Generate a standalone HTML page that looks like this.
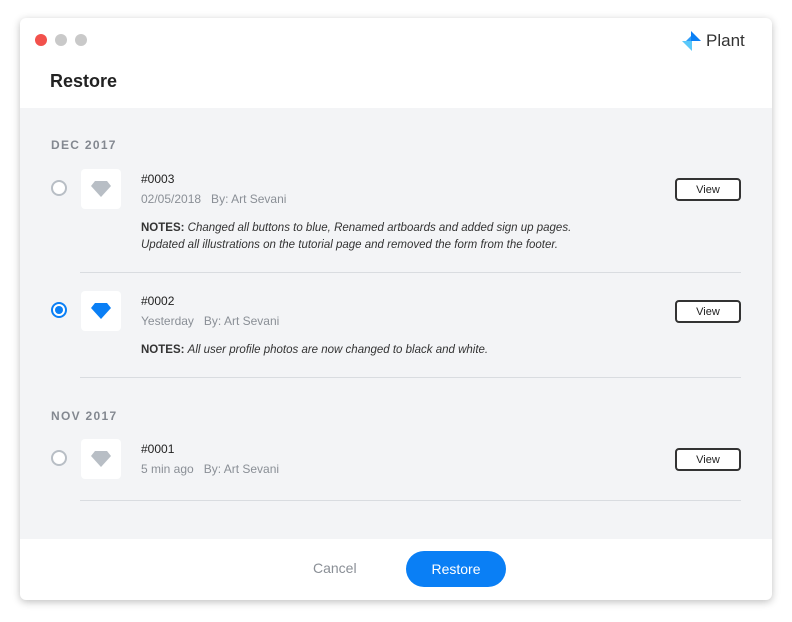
<!DOCTYPE html>
<html><head><meta charset="utf-8"><style>
*{margin:0;padding:0;box-sizing:border-box}
body{width:792px;height:622px;background:#fff;font-family:"Liberation Sans",sans-serif;position:relative;overflow:hidden}
.win{position:absolute;left:20px;top:18px;width:752px;height:582px;border-radius:6px;background:#fff;box-shadow:0 2px 8px rgba(0,0,0,.25);overflow:hidden}
.dot{position:absolute;top:16px;width:12px;height:12px;border-radius:50%}
.a{position:absolute}
.body{position:absolute;left:0;top:90px;width:752px;height:431px;background:#f3f4f6}
.sec{position:absolute;left:31px;font-size:12px;letter-spacing:1.3px;color:#838890;font-weight:bold}
.radio{position:absolute;left:31px;width:16px;height:16px;border-radius:50%;border:2px solid #b8bec5;background:#fff}
.radio.on{border-color:#0a7ff5}
.radio.on:after{content:"";position:absolute;left:2px;top:2px;width:8px;height:8px;border-radius:50%;background:#0a7ff5}
.ic{position:absolute;left:61px;width:40px;height:40px;background:#fff;border-radius:4px}
.ic svg{position:absolute;left:10px;top:11px}
.id{position:absolute;left:121px;font-size:12px;color:#222}
.meta{position:absolute;left:121px;font-size:12px;color:#8a8f96}
.notes{position:absolute;left:121px;font-size:11.5px;color:#222;line-height:17px}
.notes b{font-weight:bold;color:#333}
.notes i{color:#333}
.view{position:absolute;left:655px;width:66px;height:23px;border:2px solid #333;border-radius:4px;font-size:11px;display:flex;align-items:center;justify-content:center;color:#222;background:#fff}
.hr{position:absolute;left:60px;width:661px;height:1px;background:#d9dce0}
</style></head><body>
<div class="win">
<div class="dot" style="left:15px;background:#f2514c"></div>
<div class="dot" style="left:35px;background:#c9c9c9"></div>
<div class="dot" style="left:55px;background:#c9c9c9"></div>
<svg class="a" style="left:662px;top:13px" width="20" height="20" viewBox="0 0 20 20"><polygon points="9,0 9,10 19,10" fill="#0a7ff5"/><polygon points="0,10 10,10 10,20" fill="#5ac8fa"/><polygon points="4,10 9,10 9,5" fill="#2e9cf8"/></svg>
<div class="a" style="left:686px;top:13px;font-size:17px;color:#333">Plant</div>
<div class="a" style="left:30px;top:53px;font-size:18px;font-weight:bold;color:#222">Restore</div>
<div class="body">
<div class="sec" style="top:30px">DEC 2017</div>
<div class="radio" style="top:72px"></div>
<div class="ic" style="top:61px"><svg width="20" height="18" viewBox="0 0 20 18"><polygon points="4,1 16,1 20,6 10,17 0,6" fill="#b8bec5"/></svg></div>
<div class="id" style="top:64px">#0003</div>
<div class="meta" style="top:84px">02/05/2018&nbsp;&nbsp; By: Art Sevani</div>
<div class="notes" style="top:112px"><b>NOTES:</b> <i>Changed all buttons to blue, Renamed artboards and added sign up pages.<br>Updated all illustrations on the tutorial page and removed the form from the footer.</i></div>
<div class="view" style="top:70px">View</div>
<div class="hr" style="top:164px"></div>

<div class="radio on" style="top:194px"></div>
<div class="ic" style="top:183px"><svg width="20" height="18" viewBox="0 0 20 18"><polygon points="4,1 16,1 20,6 10,17 0,6" fill="#0a7ff5"/></svg></div>
<div class="id" style="top:186px">#0002</div>
<div class="meta" style="top:206px">Yesterday&nbsp;&nbsp; By: Art Sevani</div>
<div class="notes" style="top:234px"><b>NOTES:</b> <i>All user profile photos are now changed to black and white.</i></div>
<div class="view" style="top:192px">View</div>
<div class="hr" style="top:269px"></div>

<div class="sec" style="top:301px">NOV 2017</div>
<div class="radio" style="top:342px"></div>
<div class="ic" style="top:331px"><svg width="20" height="18" viewBox="0 0 20 18"><polygon points="4,1 16,1 20,6 10,17 0,6" fill="#b8bec5"/></svg></div>
<div class="id" style="top:334px">#0001</div>
<div class="meta" style="top:354px">5 min ago&nbsp;&nbsp; By: Art Sevani</div>
<div class="view" style="top:340px">View</div>
<div class="hr" style="top:392px"></div>
</div>
<div class="a" style="left:293px;top:542px;font-size:14px;color:#8a8f96">Cancel</div>
<div class="a" style="left:386px;top:533px;width:100px;height:36px;border-radius:18px;background:#0a7ff5;color:#fff;font-size:14px;text-align:center;line-height:36px">Restore</div>
</div>
</body></html>
